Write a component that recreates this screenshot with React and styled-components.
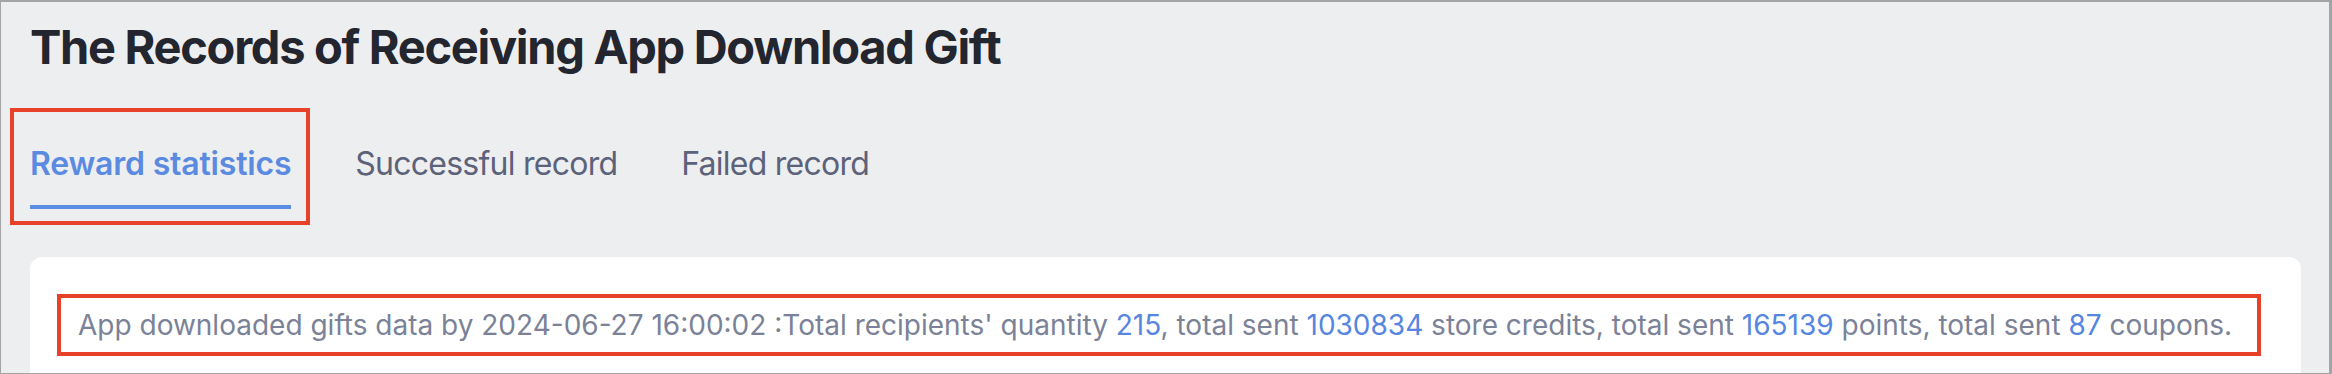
import styled, { createGlobalStyle } from 'styled-components';

const GlobalStyle = createGlobalStyle`
  html, body {
    margin: 0;
    padding: 0;
    background: #edeef0;
  }
  body {
    font-family: Inter, "Liberation Sans", sans-serif;
  }
`;

const stats = {
  time: '2024-06-27 16:00:02',
  recipients: 215,
  credits: 1030834,
  points: 165139,
  coupons: 87,
};

const tabs = ['Reward statistics', 'Successful record', 'Failed record'];

const App = () => {
  return (
    <>
      <GlobalStyle />
      <Frame>
        <Title>The Records of Receiving App Download Gift</Title>
        <TabBar>
          {tabs.map((label, index) => (
            <Tab key={label} $active={index === 0}>
              {label}
            </Tab>
          ))}
        </TabBar>
        <Card>
          <Summary>
            App downloaded gifts data by {stats.time} :Total recipients' quantity{' '}
            <Num>{stats.recipients}</Num>, total sent <Num>{stats.credits}</Num> store credits,
            total sent <Num>{stats.points}</Num> points, total sent <Num>{stats.coupons}</Num>{' '}
            coupons.
          </Summary>
        </Card>
      </Frame>
    </>
  );
};

const Frame = styled.div`
  box-sizing: border-box;
  height: 374px;
  overflow: hidden;
  border-style: solid;
  border-color: #a4a4a6;
  border-width: 2px 3px 1px 1px;
  padding: 16px 28px 0 29px;
  background: #edeef0;
`;

const Title = styled.h1`
  margin: 0;
  font-size: 47px;
  line-height: normal;
  font-weight: 700;
  color: #23252f;
  letter-spacing: -1.3px;
`;

const TabBar = styled.div`
  display: flex;
  gap: 64px;
  margin-top: 69px;
`;

const Tab = styled.div`
  position: relative;
  padding-bottom: 22px;
  font-size: 32px;
  line-height: normal;
  font-weight: ${({ $active }) => ($active ? 600 : 400)};
  letter-spacing: ${({ $active }) => ($active ? '-0.2px' : '-0.75px')};
  color: ${({ $active }) => ($active ? '#5b8ae1' : '#5b627a')};
  border-bottom: 4px solid ${({ $active }) => ($active ? '#5d8ce3' : 'transparent')};

  ${({ $active }) =>
    $active &&
    `
    &::after {
      content: '';
      position: absolute;
      inset: -36px -19px -20px -20px;
      border: 4px solid #e8412a;
    }
  `}
`;

const Card = styled.div`
  margin-top: 48px;
  background: #ffffff;
  border-radius: 12px 12px 0 0;
  padding: 51px 48px 40px;
  height: 200px;
`;

const Summary = styled.div`
  position: relative;
  display: inline-block;
  font-size: 28px;
  line-height: normal;
  color: #7b8297;

  &::after {
    content: '';
    position: absolute;
    inset: -14px -29px -14px -21px;
    border: 4px solid #e8412a;
  }
`;

const Num = styled.span`
  color: #5686e0;
`;

export default App;
